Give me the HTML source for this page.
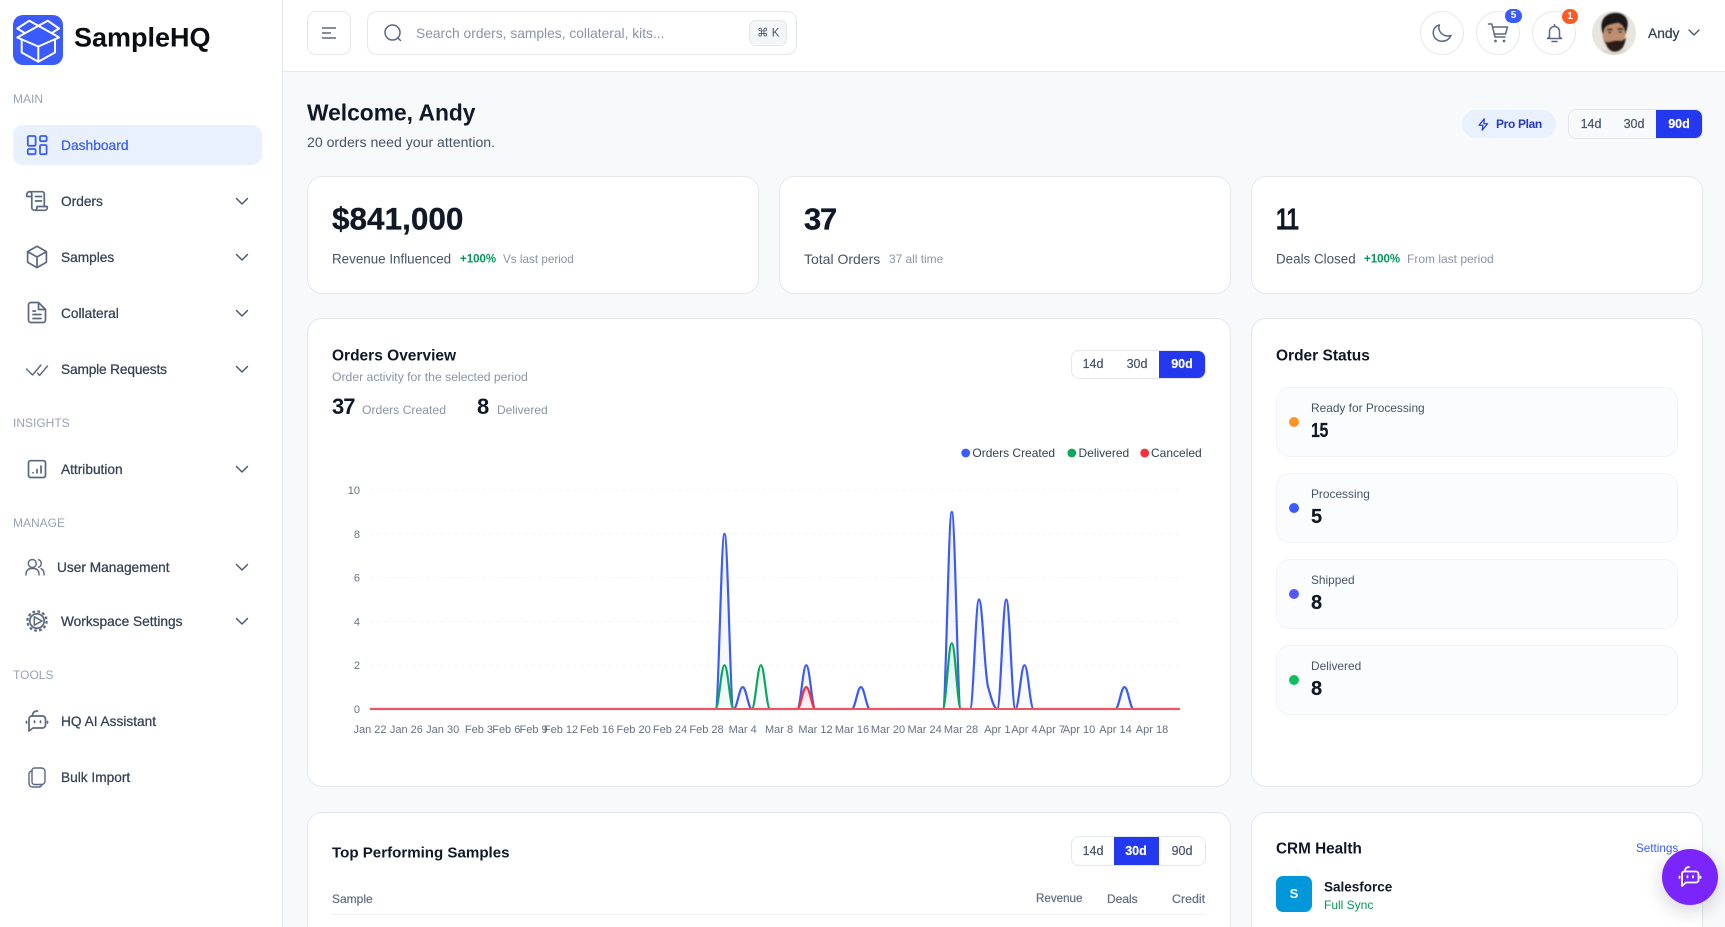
<!DOCTYPE html>
<html lang="en"><head><meta charset="utf-8"><title>SampleHQ Dashboard</title>
<style>
*{box-sizing:border-box}
html,body{margin:0;padding:0;width:1725px;height:927px;overflow:hidden;background:#f8f9fb;font-family:"Liberation Sans",sans-serif;color:#101828}
#root{position:absolute;left:0;top:0;width:1725px;height:927px;overflow:hidden;background:#f8f9fb}
.t{position:absolute;white-space:nowrap;line-height:1;transform:translateY(-50%)}
.b{font-weight:700}
.m{-webkit-text-stroke:.25px currentColor}
.box{position:absolute;background:#fff;border:1px solid #e4e7ec}
.card{position:absolute;background:#fff;border:1px solid #e4e7ec;border-radius:15px}
svg{position:absolute;overflow:visible}
.nav{left:61px;font-size:13.7px;color:#344054}
.sec{left:13px;font-size:12px;color:#98a2b3}
.tog{position:absolute;border:1px solid #e4e7ec;border-radius:8px;overflow:hidden}
.on{position:absolute;top:0;bottom:0;background:#2438ef}
.tt{position:absolute;top:50%;transform:translate(-50%,-50%);font-size:12.5px;line-height:1;color:#475467;-webkit-text-stroke:.2px currentColor}
.st{position:absolute;left:1276px;width:402px;height:70px;background:#fbfcfe;border:1px solid #f1f3f6;border-radius:14px}
.dot{position:absolute;left:1289px;width:10px;height:10px;border-radius:50%}
.sl{left:1311px;font-size:11.9px;color:#475467}
.sv{left:1311px;font-size:20px;font-weight:700;color:#101828;-webkit-text-stroke:.2px currentColor}
.cir{position:absolute;top:11px;width:44px;height:44px;border-radius:50%;border:1px solid #e4e7ec;background:#fff}
</style></head><body><div id="root">

<!-- sidebar -->
<div class="box" style="left:0;top:0;width:283px;height:927px;border-width:0 1px 0 0"></div>
<div style="position:absolute;left:13px;top:15px;width:50px;height:50px;border-radius:10px;background:#3b5bfd"></div>
<svg style="left:13px;top:15px" width="50" height="50" viewBox="0 0 50 50" fill="none" stroke="#fff" stroke-width="2" stroke-linecap="round" stroke-linejoin="round"><path d="M4.3 13.5L16.3 5.7L42 20M46 13.5L34.7 5.7L8.7 20M4.3 13.5L12 18.2M46 13.5L38.5 18.2M8.7 20L4.3 22.5L25.3 31.5L46 22.5L42 20M8.7 25.5V37.5L25.3 46.7L42 37.5V25.5M25.3 31.5V46.7"/></svg>
<div class="t b" style="left:74px;top:38px;font-size:27px;color:#0b0d12">SampleHQ</div>

<div class="t sec" style="top:99px">MAIN</div>
<div style="position:absolute;left:13px;top:125px;width:249px;height:40px;border-radius:10px;background:#e8f1fd"></div>
<svg style="left:0;top:0" width="283" height="927" fill="none" stroke="#5b6880" stroke-width="1.7" stroke-linecap="round" stroke-linejoin="round">
<g stroke="#3b5bfd" stroke-width="1.8"><rect x="27.8" y="136" width="7.8" height="9.8" rx="1.2"/><rect x="40" y="136" width="6.6" height="5.2" rx="1.2"/><rect x="27.8" y="149" width="7.8" height="5.2" rx="1.2"/><rect x="40" y="145" width="6.6" height="9.2" rx="1.2"/></g>
<path d="M31 196.500H26.800V194.500A2.800 2.800 0 0 1 29.600 191.700H42A2.300 2.300 0 0 1 44.300 194V206.500"/><path d="M29.500 191.700A2.500 2.500 0 0 1 31.800 194.500V207.500A2.800 2.800 0 0 0 34.500 210.300H44.500A2.800 2.800 0 0 0 47.300 207.500V206.500H37V207.500A2.800 2.800 0 0 1 34.500 210.300"/><path d="M35.500 196.500H41.500M35.500 201H41.500"/>
<path d="M37 246.300L46.400 251.600V262.300L37 267.600L27.600 262.300V251.600ZM27.600 251.600L37 257L46.400 251.600M37 257V267.600"/>
<path d="M38.500 302.500H31A2.500 2.500 0 0 0 28.500 305V320A2.500 2.500 0 0 0 31 322.500H43A2.500 2.500 0 0 0 45.500 320V309.500ZM38.500 302.500V309.500H45.500M33 311H35.500M33 314.500H41M33 318.500H41"/>
<path stroke-width="1.4" d="M26.500 369L32.500 375L41 365M37.500 373L39.500 375.500L47.500 366"/>
<rect x="28.500" y="460.700" width="17" height="16.800" rx="2"/><path d="M33 472.700V472.900M37 469.500V472.900M41 466V472.900"/>
<g stroke-width="1.4"><circle cx="32.300" cy="563.500" r="4"/><path d="M26 575V573.500A5 5 0 0 1 31 568.500H34A5 5 0 0 1 39 573.500V575M38.500 559.700A4 4 0 0 1 38.500 567.300M41 568.700A5 5 0 0 1 44 573.500V575"/></g>
<circle cx="37" cy="621" r="7.200"/><circle cx="37" cy="621" r="9.600" stroke-width="2.200" stroke-dasharray="2.800 2.230" stroke-linecap="butt"/><path d="M34.300 616.800L42 621L34.300 625.200Z" stroke-width="1.500"/>
<path d="M32.500 716.300C32.500 711 36 711 37.500 711M31.500 716H42.500A3 3 0 0 1 45.500 719V725A3 3 0 0 1 42.500 728H33L29 731V719A3 3 0 0 1 31.500 716ZM26.500 721.500V723M47.500 721.500V723M34.500 721V722.500M40.500 721V722.500"/>
<g stroke-width="1.4"><path d="M34.500 768H41.500A3.500 3.500 0 0 1 45 771.500V781A3.500 3.500 0 0 1 41.500 784.500H34.500A2.500 2.500 0 0 1 32 782V770.500A2.500 2.500 0 0 1 34.500 768Z"/><path d="M32 771A3 3 0 0 0 29 774V783.500A3.500 3.500 0 0 0 32.500 787H38.500A3.500 3.500 0 0 0 42 784.500"/></g>
<g stroke="#475467" stroke-width="1.4"><path d="M236.500 198.500L242 204L247.500 198.500M236.500 254.500L242 260L247.500 254.500M236.500 310.500L242 316L247.500 310.500M236.500 366.500L242 372L247.500 366.500M236.500 466.500L242 472L247.500 466.500M236.500 564.500L242 570L247.500 564.500M236.500 618.500L242 624L247.500 618.500"/></g>
</svg>
<div class="t m" style="left:61px;top:145.600px;font-size:13.800px;color:#3b5bfd">Dashboard</div>
<div class="t nav m" style="top:201.500px">Orders</div>
<div class="t nav m" style="top:257.500px">Samples</div>
<div class="t nav m" style="top:313.500px">Collateral</div>
<div class="t nav m" style="top:369.500px;letter-spacing:-.15px">Sample Requests</div>
<div class="t sec" style="top:423px">INSIGHTS</div>
<div class="t nav m" style="top:469.500px">Attribution</div>
<div class="t sec" style="top:523px">MANAGE</div>
<div class="t nav m" style="top:567.500px;left:57px">User Management</div>
<div class="t nav m" style="top:621.500px">Workspace Settings</div>
<div class="t sec" style="top:675px">TOOLS</div>
<div class="t nav m" style="top:721.500px">HQ AI Assistant</div>
<div class="t nav m" style="top:777.500px">Bulk Import</div>

<!-- topbar -->
<div class="box" style="left:283px;top:0;width:1442px;height:72px;border-width:0 0 1px 0"></div>
<div class="box" style="left:307px;top:11px;width:44px;height:44px;border-radius:9px"></div>
<svg style="left:321px;top:26px" width="16" height="14" fill="none" stroke="#5b6880" stroke-width="1.6"><path d="M1 2H15M1 7H10M1 12H15"/></svg>
<div class="box" style="left:367px;top:11px;width:430px;height:44px;border-radius:10px"></div>
<svg style="left:383px;top:23px" width="20" height="20" fill="none" stroke="#5b6880" stroke-width="1.5" stroke-linecap="round"><circle cx="9.500" cy="9.500" r="7.500"/><path d="M15 15L17.500 17.500"/></svg>
<div class="t" style="left:416px;top:33.600px;font-size:13.800px;color:#8a94a6">Search orders, samples, collateral, kits...</div>
<div style="position:absolute;left:749px;top:20px;width:38px;height:26px;border-radius:7px;background:#f5f6f8;border:1px solid #e4e7ec"></div>
<div class="t" style="left:757px;top:33.500px;font-size:11.500px;color:#475467;font-family:'Liberation Sans','DejaVu Sans',sans-serif">⌘ K</div>

<div class="cir" style="left:1420px"></div><div class="cir" style="left:1476px"></div><div class="cir" style="left:1532px"></div>
<svg style="left:0;top:0" width="1725" height="70" fill="none" stroke="#5b6880" stroke-width="1.5" stroke-linecap="round" stroke-linejoin="round">
<path d="M1439.500 25C1435 26 1433 29.500 1433.300 33.500C1433.700 38 1437.500 41.300 1442 41.300C1446 41.300 1449.500 39 1451 35.500C1446.500 37 1441.500 35 1439.700 31C1438.700 29 1438.500 27 1439.500 25Z"/>
<path d="M1488.500 24H1491.800L1495 37H1505M1492.400 27H1507.500L1505.500 34H1494"/><circle cx="1495.500" cy="41" r=".6"/><circle cx="1504" cy="41" r=".6"/>
<path d="M1554.500 24.500V26M1549.500 37V31.500A5 5 0 0 1 1559.500 31.500V37L1561.500 38.500H1547.500ZM1552 41.500H1557"/>
<path stroke="#475467" stroke-width="1.3" d="M1689 30L1694 35L1699 30"/>
</svg>
<div style="position:absolute;left:1505px;top:9px;width:17px;height:14px;border-radius:7px;background:#3b5bfd;color:#fff;font-size:10px;font-weight:700;text-align:center;line-height:14px">5</div>
<div style="position:absolute;left:1562px;top:9px;width:16px;height:15px;border-radius:8px;background:#fd5a26;color:#fff;font-size:10px;font-weight:700;text-align:center;line-height:15px">1</div>
<svg style="left:1592px;top:11px" width="44" height="44" viewBox="0 0 44 44"><defs><clipPath id="av"><circle cx="22" cy="22" r="22"/></clipPath><filter id="bl1" x="-10%" y="-10%" width="120%" height="120%"><feGaussianBlur stdDeviation=".7"/></filter></defs><g clip-path="url(#av)"><rect width="44" height="44" fill="#e6e5df"/><g filter="url(#bl1)"><path d="M2 46C5 39 12 38 22 38C32 38 38 39 42 46Z" fill="#ded8d0"/><path d="M10 16C10 26 12 38 21 39C29 40 34 30 34 14L22 8Z" fill="#bd8f70"/><path d="M13 29C15 38 18 41 23 41C30 41 33 34 34 26C32 29 30 30 27 29.500C22 29 19 31 16 31C14 31 14 30 13 29Z" fill="#2a1c16"/><path d="M11 23C7 12 11 3 22 2C32 1 38 8 35 18C34 20 34 22 33.500 24C33 17 30 13 26 12C20 13 15 14 13 17C12 19 12 21 11 23Z" fill="#1d1512"/><path d="M15 18.500H20.500M25.500 18H31" stroke="#2a1c16" stroke-width="1.800"/><path d="M16 21.500H19.500M26.500 21H30" stroke="#3d2a20" stroke-width="1.500"/></g></g></svg>
<div class="t m" style="left:1648px;top:33.600px;font-size:13.800px;color:#344054">Andy</div>

<!-- welcome -->
<div class="t b" style="left:307px;top:113px;font-size:22.800px">Welcome, Andy</div>
<div class="t" style="left:307px;top:142px;font-size:14.100px;color:#475467">20 orders need your attention.</div>
<div style="position:absolute;left:1462px;top:110px;width:94px;height:28px;border-radius:14px;background:#e8f1fd"></div>
<svg style="left:1477.500px;top:118px" width="11" height="13" viewBox="0 0 13 16" fill="none" stroke="#2438ef" stroke-width="1.500" stroke-linejoin="round"><path d="M7.500 1L1 9H5.800L4.800 15L11.500 7H7Z"/></svg>
<div class="t b" style="left:1496px;top:124px;font-size:12px;letter-spacing:-.35px;color:#2438c9">Pro Plan</div>
<div class="tog" style="left:1568px;top:109px;width:135px;height:30px;background:#f8f9fb"><div class="tt" style="left:22px">14d</div><div class="tt" style="left:65px">30d</div><div class="on" style="left:87px;right:0"></div><div class="tt b" style="left:110px;color:#fff">90d</div></div>

<!-- KPIs -->
<div class="card" style="left:307px;top:176px;width:452px;height:118px"></div>
<div class="card" style="left:779px;top:176px;width:452px;height:118px"></div>
<div class="card" style="left:1251px;top:176px;width:452px;height:118px"></div>
<div class="t b" style="left:332px;top:219px;font-size:31.500px;-webkit-text-stroke:.3px currentColor">$841,000</div>
<div class="t" style="left:332px;top:259px;font-size:13.400px;color:#475467">Revenue Influenced</div>
<div class="t b" style="left:460px;top:259.700px;font-size:11.500px;color:#039855">+100%</div>
<div class="t" style="left:503px;top:259.700px;font-size:11.700px;color:#8a94a6">Vs last period</div>
<div class="t b" style="left:804px;top:219px;font-size:31px;letter-spacing:-1.200px;-webkit-text-stroke:.3px currentColor">37</div>
<div class="t" style="left:804px;top:259px;font-size:14px;color:#475467">Total Orders</div>
<div class="t" style="left:889px;top:259.700px;font-size:11.900px;color:#8a94a6">37 all time</div>
<div class="t b" style="left:1276px;top:219px;font-size:31px;letter-spacing:-1px;transform:translateY(-50%) scaleX(.72);transform-origin:left center;-webkit-text-stroke:.3px currentColor">11</div>
<div class="t" style="left:1276px;top:259px;font-size:13.400px;color:#475467">Deals Closed</div>
<div class="t b" style="left:1364px;top:259.700px;font-size:11.500px;color:#039855">+100%</div>
<div class="t" style="left:1407px;top:259px;font-size:12px;color:#8a94a6">From last period</div>

<!-- Orders overview -->
<div class="card" style="left:307px;top:318px;width:924px;height:469px"></div>
<div class="t b" style="left:332px;top:356px;font-size:15.500px">Orders Overview</div>
<div class="t" style="left:332px;top:377px;font-size:12.200px;color:#8a94a6">Order activity for the selected period</div>
<div class="t b" style="left:332px;top:407px;font-size:22px;letter-spacing:-1px">37</div>
<div class="t" style="left:362px;top:410px;font-size:12.200px;color:#8a94a6">Orders Created</div>
<div class="t b" style="left:477px;top:407px;font-size:22px">8</div>
<div class="t" style="left:497px;top:410px;font-size:12px;color:#8a94a6">Delivered</div>
<div class="tog" style="left:1071px;top:349.500px;width:135px;height:29.500px;background:#fff"><div class="tt" style="left:21px;top:48%">14d</div><div class="tt" style="left:65px;top:48%">30d</div><div class="on" style="left:87px;right:0"></div><div class="tt b" style="left:110px;top:48%;color:#fff">90d</div></div>

<svg style="left:0;top:0" width="1725" height="800" font-family="'Liberation Sans',sans-serif">
<defs>
<linearGradient id="gb" gradientUnits="userSpaceOnUse" x1="0" y1="510" x2="0" y2="709"><stop offset="0" stop-color="#3b5bfd" stop-opacity=".1"/><stop offset="1" stop-color="#3b5bfd" stop-opacity=".02"/></linearGradient>
<linearGradient id="gg" gradientUnits="userSpaceOnUse" x1="0" y1="640" x2="0" y2="709"><stop offset="0" stop-color="#0ba75a" stop-opacity=".1"/><stop offset="1" stop-color="#0ba75a" stop-opacity=".02"/></linearGradient>
<linearGradient id="gr" gradientUnits="userSpaceOnUse" x1="0" y1="687" x2="0" y2="709"><stop offset="0" stop-color="#f5323f" stop-opacity=".18"/><stop offset="1" stop-color="#f5323f" stop-opacity=".02"/></linearGradient>
</defs>
<g stroke="#f2f4f7" stroke-width="1" stroke-dasharray="4 3"><path d="M370 490H1180M370 533.800H1180M370 577.500H1180M370 621.500H1180M370 665.200H1180"/></g>
<g font-size="11" fill="#667085" text-anchor="end"><text x="360" y="494">10</text><text x="360" y="538">8</text><text x="360" y="581.500">6</text><text x="360" y="625.500">4</text><text x="360" y="669">2</text><text x="360" y="713">0</text></g>
<path fill="url(#gb)" stroke="#3b5bf6" stroke-width="2.200" stroke-linejoin="round" d="M370 709L715.400 709C718.900 709 721 533.800 724.500 533.800C728 533.800 730.100 709 733.600 709C737.100 709 739.200 687.100 742.700 687.100C746.200 687.100 748.300 709 751.800 709L797.200 709C800.700 709 802.800 665.200 806.300 665.200C809.800 665.200 811.900 709 815.400 709L851.800 709C855.300 709 857.400 687.100 860.900 687.100C864.400 687.100 866.500 709 870 709L942.700 709C946.200 709 948.300 511.900 951.800 511.900C955.300 511.900 957.400 709 960.900 709L970 709C973.500 709 975.500 599.500 979 599.500C982.500 599.500 984.600 675 988.100 687.100C991.100 697 993.700 709 997.200 709C1000.700 709 1002.800 599.500 1006.300 599.500C1009.800 599.500 1011.900 709 1015.400 709C1018.900 709 1021 665.200 1024.500 665.200C1028 665.200 1030.100 709 1033.600 709L1115.400 709C1118.900 709 1121 687.100 1124.500 687.100C1128 687.100 1130.100 709 1133.600 709L1180 709"/>
<path fill="url(#gg)" stroke="#0ba75a" stroke-width="2.200" d="M715.400 709C718.900 709 721 665.200 724.500 665.200C728 665.200 730.100 709 733.600 709M751.800 709C755.300 709 757.400 665.200 760.900 665.200C764.400 665.200 766.500 709 770 709M942.700 709C946.200 709 948.300 643.300 951.800 643.300C955.300 643.300 957.400 709 960.900 709"/>
<path fill="url(#gr)" stroke="#f8303f" stroke-width="2.200" d="M797.200 709C800.700 709 802.800 687.100 806.300 687.100C809.800 687.100 811.900 709 815.400 709"/>
<path fill="none" stroke="#ee5561" stroke-width="2" d="M370 709H1180"/>
<g font-size="11" fill="#667085" text-anchor="middle"><text x="370" y="733">Jan 22</text><text x="406.400" y="733">Jan 26</text><text x="442.700" y="733">Jan 30</text><text x="479" y="733">Feb 3</text><text x="506.300" y="733">Feb 6</text><text x="533.600" y="733">Feb 9</text><text x="561" y="733">Feb 12</text><text x="597" y="733">Feb 16</text><text x="633.600" y="733">Feb 20</text><text x="670" y="733">Feb 24</text><text x="706.500" y="733">Feb 28</text><text x="742.700" y="733">Mar 4</text><text x="779" y="733">Mar 8</text><text x="815.500" y="733">Mar 12</text><text x="852" y="733">Mar 16</text><text x="888" y="733">Mar 20</text><text x="924.600" y="733">Mar 24</text><text x="961" y="733">Mar 28</text><text x="997.300" y="733">Apr 1</text><text x="1024.500" y="733">Apr 4</text><text x="1051.800" y="733">Apr 7</text><text x="1079" y="733">Apr 10</text><text x="1115.500" y="733">Apr 14</text><text x="1152" y="733">Apr 18</text></g>
<circle cx="965.700" cy="453" r="4.400" fill="#3b5bfd"/><circle cx="1071.800" cy="453" r="4.400" fill="#0ba75a"/><circle cx="1144.700" cy="453" r="4.400" fill="#fb2c3c"/>
<g font-size="12" fill="#344054"><text x="972.400" y="457">Orders Created</text><text x="1078.500" y="457">Delivered</text><text x="1151" y="457">Canceled</text></g>
</svg>

<!-- Order status -->
<div class="card" style="left:1251px;top:318px;width:452px;height:469px"></div>
<div class="t b" style="left:1276px;top:356px;font-size:15.500px">Order Status</div>
<div class="st" style="top:387px"></div><div class="dot" style="top:417px;background:#ff9425"></div><div class="t sl" style="top:408.500px">Ready for Processing</div><div class="t sv" style="top:431px;letter-spacing:-.5px;transform:translateY(-50%) scaleX(.8);transform-origin:left center">15</div>
<div class="st" style="top:473px"></div><div class="dot" style="top:503px;background:#3b5bfd"></div><div class="t sl" style="top:494.500px">Processing</div><div class="t sv" style="top:517px">5</div>
<div class="st" style="top:559px"></div><div class="dot" style="top:589px;background:#5458f7"></div><div class="t sl" style="top:580.500px">Shipped</div><div class="t sv" style="top:603px">8</div>
<div class="st" style="top:645px"></div><div class="dot" style="top:675px;background:#0fbf5f"></div><div class="t sl" style="top:666.500px">Delivered</div><div class="t sv" style="top:689px">8</div>

<!-- Top samples -->
<div class="card" style="left:307px;top:812px;width:924px;height:140px"></div>
<div class="t b" style="left:332px;top:852.500px;font-size:15.100px">Top Performing Samples</div>
<div class="tog" style="left:1071px;top:836px;width:135px;height:30px;background:#fff"><div class="tt" style="left:21px">14d</div><div class="on" style="left:42px;width:45px"></div><div class="tt b" style="left:64px;color:#fff">30d</div><div class="tt" style="left:110px">90d</div></div>
<div class="t m" style="left:332px;top:898.500px;font-size:12px;color:#667085">Sample</div>
<div class="t m" style="left:1036px;top:898.500px;font-size:11.600px;color:#667085">Revenue</div>
<div class="t m" style="left:1107px;top:898.500px;font-size:12px;color:#667085">Deals</div>
<div class="t m" style="left:1172px;top:898.500px;font-size:12.400px;color:#667085">Credit</div>
<div style="position:absolute;left:332px;top:914px;width:873px;height:1px;background:#eef0f3"></div>

<!-- CRM -->
<div class="card" style="left:1251px;top:812px;width:452px;height:140px"></div>
<div class="t b" style="left:1276px;top:848.800px;font-size:15.300px">CRM Health</div>
<div class="t" style="left:1636px;top:848.500px;font-size:11.700px;color:#3b5bfd">Settings</div>
<div style="position:absolute;left:1276px;top:876px;width:36px;height:36px;border-radius:7px;background:#0098da;color:#fff;font-size:13px;font-weight:700;text-align:center;line-height:36px">S</div>
<div class="t b" style="left:1324px;top:886.500px;font-size:13.500px">Salesforce</div>
<div class="t" style="left:1324px;top:904.500px;font-size:12px;color:#039855">Full Sync</div>

<!-- FAB -->
<div style="position:absolute;left:1662px;top:849px;width:56px;height:56px;border-radius:50%;background:#7a25fb;box-shadow:0 6px 18px rgba(16,24,40,.18)"></div>
<svg style="left:1678px;top:865px" width="24" height="24" fill="none" stroke="#fff" stroke-width="1.800" stroke-linecap="round" stroke-linejoin="round"><path d="M7 6.500C7 3 9 2 11 2M6 6.500H18A2.500 2.500 0 0 1 20.500 9V15A2.500 2.500 0 0 1 18 17.500H8L4 21V9A2.500 2.500 0 0 1 6 6.500ZM1.500 11.500V13M22.500 11.500V13M9.500 11V12.500M15 11V12.500"/></svg>
</div></body></html>
